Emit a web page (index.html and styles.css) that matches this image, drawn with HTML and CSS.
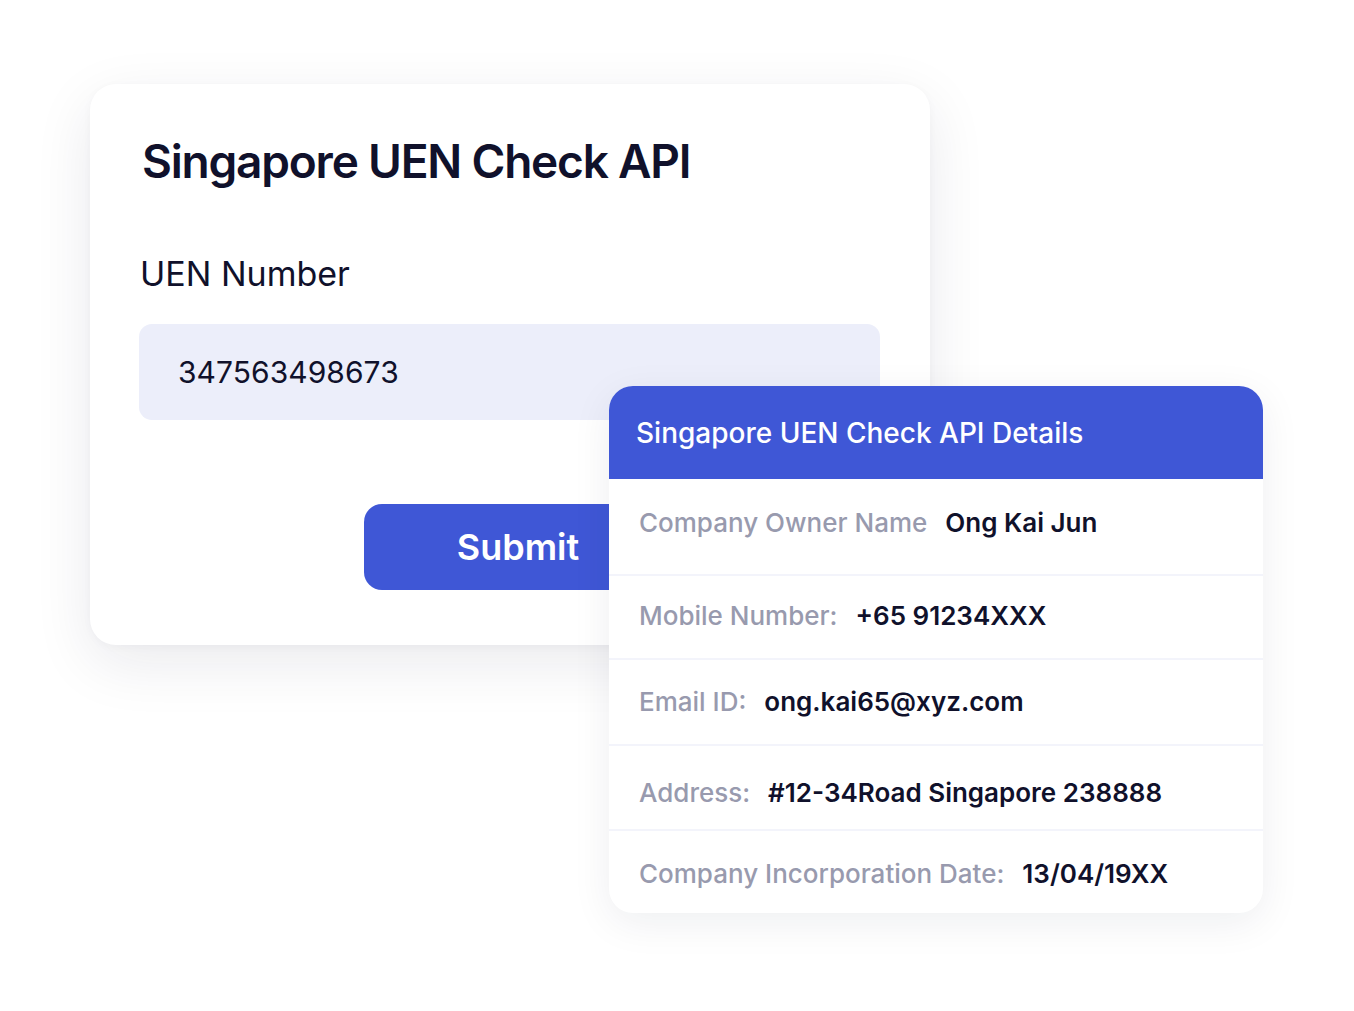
FILE: index.html
```html
<!DOCTYPE html>
<html lang="en">
<head>
<meta charset="utf-8">
<title>Singapore UEN Check API</title>
<link rel="stylesheet" href="styles.css">
</head>
<body>
<div class="stage">
  <section class="form-card">
    <h1 class="form-title">Singapore UEN Check API</h1>
    <label class="field-label">UEN Number</label>
    <div class="field-input">347563498673</div>
    <button class="submit-btn">Submit</button>
  </section>

  <section class="details-card">
    <header class="details-head">Singapore UEN Check API Details</header>
    <div class="row row-1"><span class="lbl">Company Owner Name</span><span class="val">Ong Kai Jun</span></div>
    <div class="row row-2"><span class="lbl">Mobile Number:</span><span class="val">+65 91234XXX</span></div>
    <div class="row row-3"><span class="lbl">Email ID:</span><span class="val">ong.kai65@xyz.com</span></div>
    <div class="row row-4"><span class="lbl">Address:</span><span class="val">#12-34Road Singapore 238888</span></div>
    <div class="row row-5"><span class="lbl">Company Incorporation Date:</span><span class="val">13/04/19XX</span></div>
  </section>
</div>
</body>
</html>
```
FILE: styles.css
```css
* { box-sizing: border-box; }
html, body { margin: 0; padding: 0; background: #ffffff; }
body {
  font-family: Inter, "Noto Sans", "Liberation Sans", sans-serif;
  width: 1354px;
  height: 1011px;
  overflow: hidden;
}
.stage {
  position: relative;
  width: 1354px;
  height: 1011px;
  padding: 84px 0 0 90px;
}
.form-card {
  width: 840px;
  height: 561px;
  background: #ffffff;
  border-radius: 26px;
  box-shadow: 0 18px 60px rgba(20, 24, 60, 0.09), 0 2px 10px rgba(20, 24, 60, 0.03);
  padding: 49px 50px 0 52px;
  display: flex;
  flex-direction: column;
  align-items: flex-start;
}
.form-title {
  margin: 0;
  font-size: 46px;
  line-height: 56px;
  font-weight: 600;
  color: #10112b;
  letter-spacing: -1.2px;
}
.field-label {
  margin-top: 65px;
  margin-left: -2px;
  font-size: 34px;
  line-height: 40px;
  font-weight: 400;
  color: #10112b;
}
.field-input {
  margin-top: 30px;
  margin-left: -3px;
  width: 741px;
  height: 96px;
  border-radius: 13px;
  background: #eceefa;
  display: flex;
  align-items: center;
  padding-left: 39px;
  font-size: 30px;
  color: #10112b;
  letter-spacing: 0.05px;
}
.submit-btn {
  margin-top: 84px;
  margin-left: 222px;
  width: 308px;
  height: 86px;
  border: none;
  border-radius: 18px;
  background: #3f57d6;
  color: #ffffff;
  font-family: inherit;
  font-size: 36px;
  font-weight: 600;
  padding: 0;
}
.details-card {
  position: absolute;
  left: 609px;
  top: 386px;
  width: 654px;
  height: 527px;
  background: #ffffff;
  border-radius: 24px;
  box-shadow: 0 10px 40px rgba(20, 24, 60, 0.07);
  overflow: hidden;
  display: flex;
  flex-direction: column;
}
.details-head {
  height: 93px;
  flex: none;
  background: #3f57d6;
  color: #ffffff;
  font-size: 28px;
  font-weight: 500;
  display: flex;
  align-items: center;
  padding-left: 27px;
}
.row {
  display: flex;
  align-items: flex-start;
  gap: 18px;
  padding-left: 30px;
  font-size: 26px;
  line-height: 30px;
  border-bottom: 2px solid #f3f4fb;
  flex: none;
}
.row-1 { height: 97px; padding-top: 29px; }
.row-2 { height: 84px; padding-top: 25px; }
.row-3 { height: 86px; padding-top: 27px; }
.row-4 { height: 85px; padding-top: 32px; }
.row-5 { height: 82px; padding-top: 28px; border-bottom: none; }
.lbl { color: #989aae; font-weight: 500; }
.val { color: #10112b; font-weight: 560; }
```
